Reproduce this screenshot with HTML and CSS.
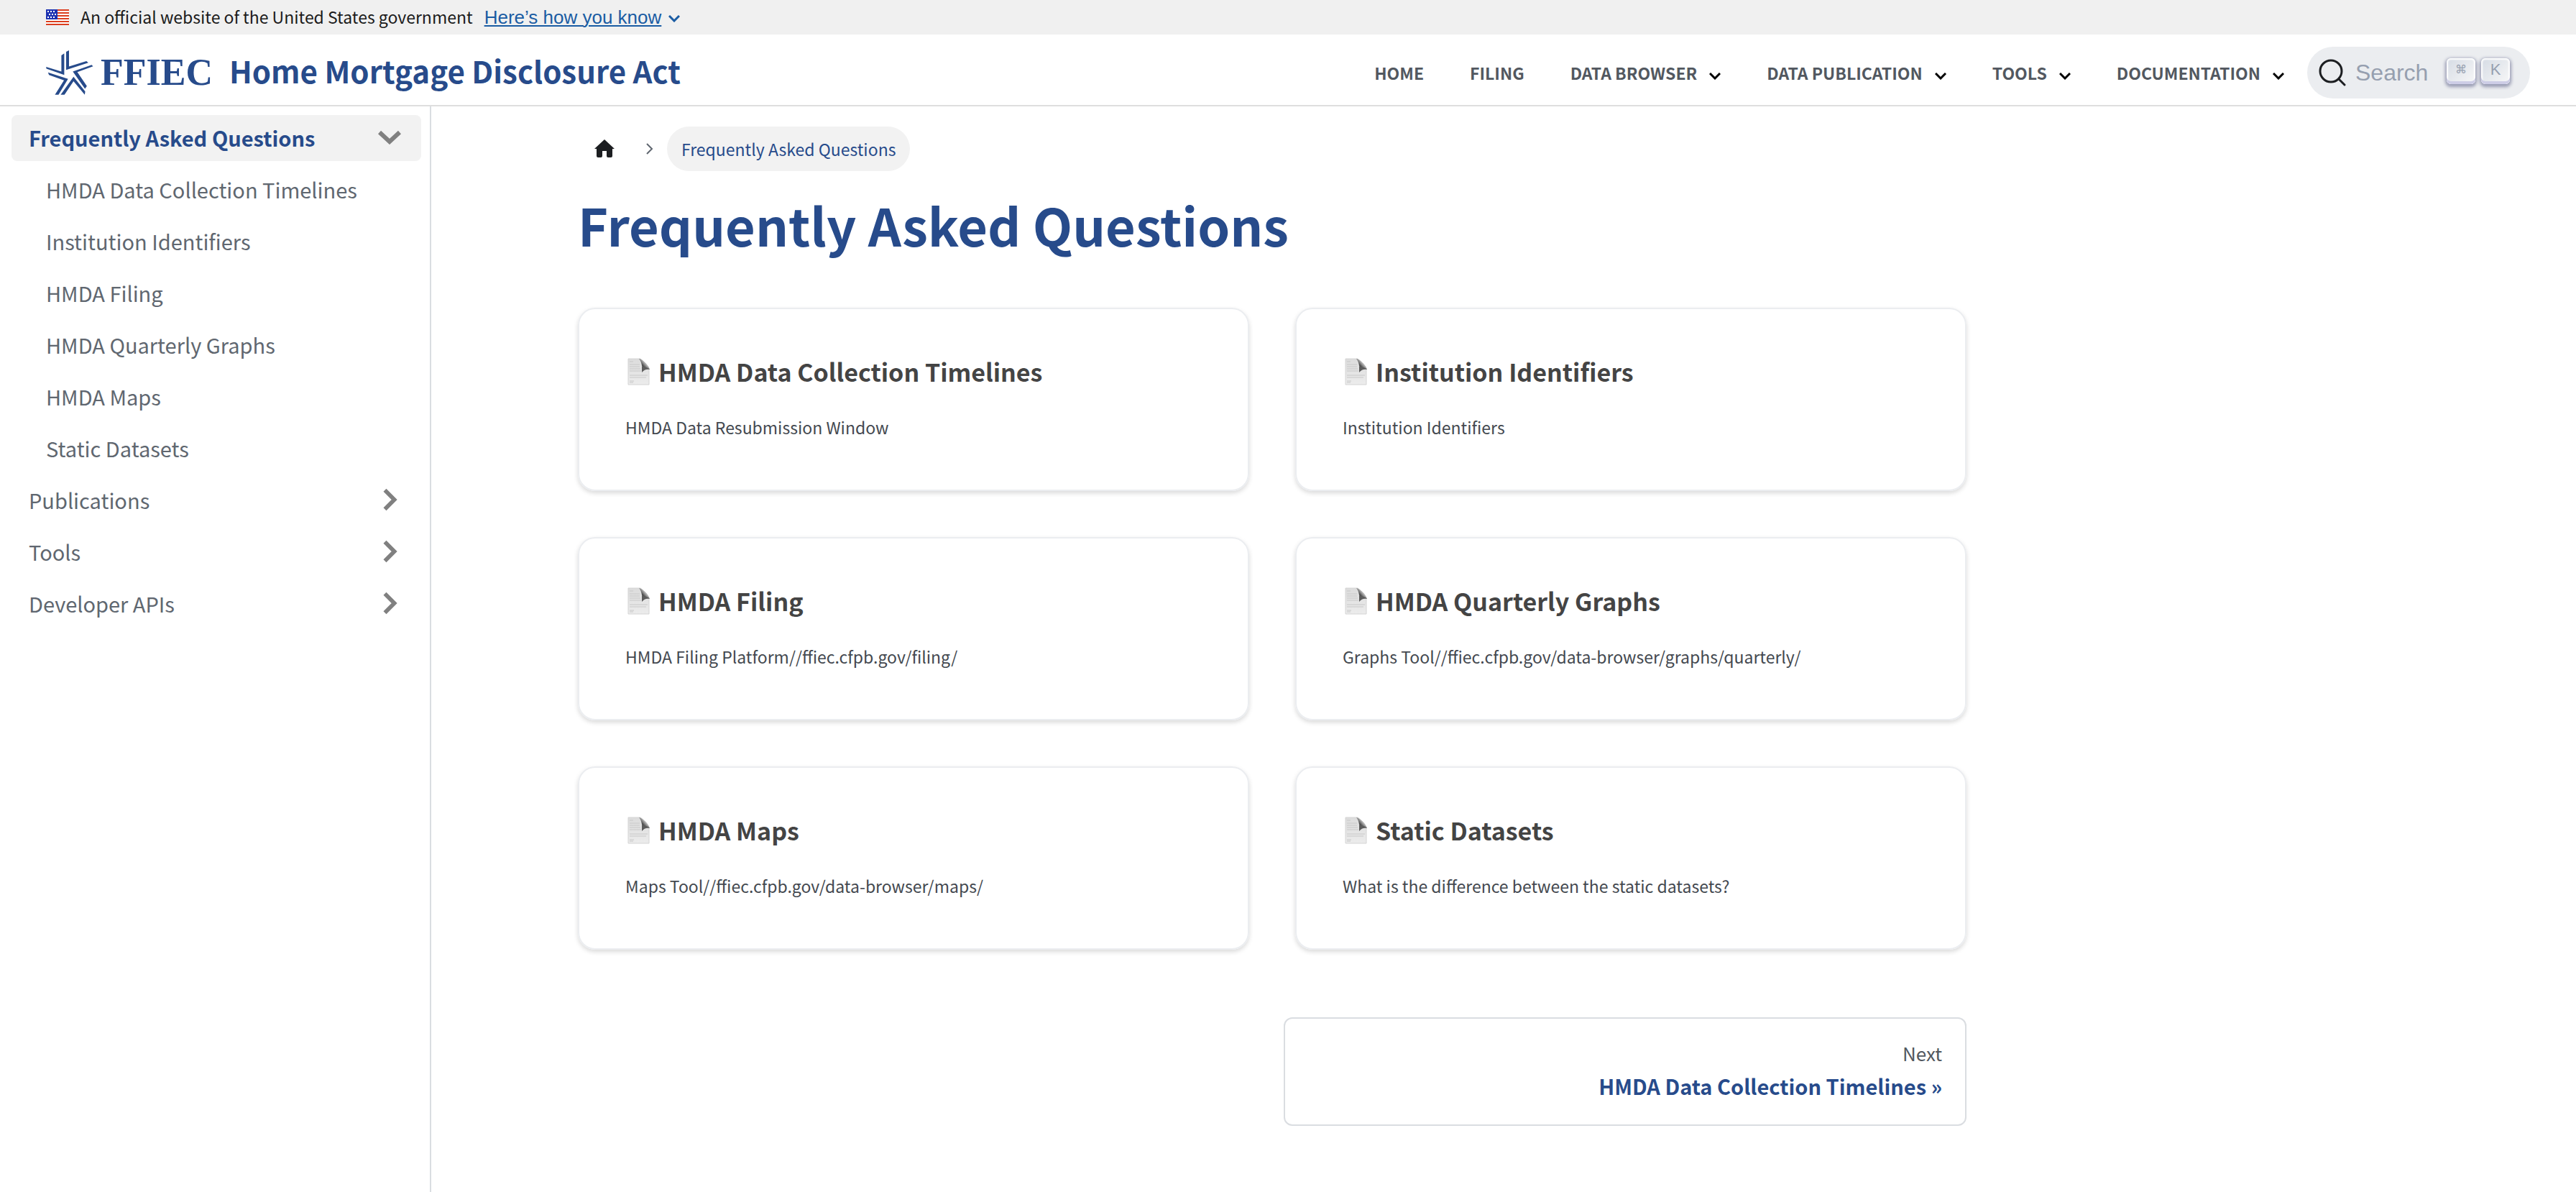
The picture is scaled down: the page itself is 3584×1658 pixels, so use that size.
FILE: index.html
```html
<!DOCTYPE html>
<html lang="en">
<head>
<meta charset="utf-8">
<meta name="viewport" content="width=device-width, initial-scale=1">
<title>Frequently Asked Questions | HMDA Documentation</title>
<link rel="stylesheet" href="styles.css">
</head>
<body>
<svg class="sprite" aria-hidden="true">
  <defs>
    <linearGradient id="page-fill" x1="0" y1="0" x2="0" y2="1">
      <stop offset="0" stop-color="#dcdcdc"/>
      <stop offset="1" stop-color="#ececec"/>
    </linearGradient>
    <linearGradient id="curl-fill" x1="1" y1="0" x2="0" y2="1">
      <stop offset="0" stop-color="#ffffff"/>
      <stop offset="0.4" stop-color="#b4b4b4"/>
      <stop offset="0.6" stop-color="#4c4c4c"/>
      <stop offset="1" stop-color="#d0d0d0"/>
    </linearGradient>
  </defs>
  <symbol id="icon-page" viewBox="0 0 32 38">
    <path d="M1 1h17c3 2 10 9 12 14v22H1z" fill="url(#page-fill)" stroke="#d4d4d4"/>
    <path d="M3 5h5M3 9h14M3 12h14M3 15h15M3 18h16M3 24h25M3 27h23M3 32h6M3 34h5" stroke="#c8c8c8" fill="none"/>
    <path d="M16 1c4 0 14 9 15 15-3-2-8-3-11 2 1-7-1-14-4-17z" fill="url(#curl-fill)"/>
    <path d="M20 12c4 0 9 1 11 4-4-1-8 0-11 4z" fill="#5c5c5c"/>
  </symbol>
  <symbol id="icon-caret" viewBox="0 0 16 10">
    <path d="M1 1l7 7 7-7" fill="none" stroke="currentColor" stroke-width="3"/>
  </symbol>
  <symbol id="icon-right" viewBox="0 0 20 34">
    <path d="M2 3l14 14L2 31" fill="none" stroke="currentColor" stroke-width="6"/>
  </symbol>
  <symbol id="icon-down" viewBox="0 0 32 20">
    <path d="M2 3l14 13L30 3" fill="none" stroke="currentColor" stroke-width="6"/>
  </symbol>
</svg>

<div class="banner">
  <svg class="flag" viewBox="0 0 32 22" aria-hidden="true">
    <path fill="#fff" d="M0 0h32v22H0z"/>
    <path stroke="#db3e1f" stroke-width="2" d="M0 1h32M0 5h32M0 9h32M0 13h32M0 17h32M0 21h32"/>
    <path fill="#1e33b1" d="M0 0h16v14H0z"/>
    <path stroke="#fff" stroke-width="2" stroke-dasharray="2 2" d="M2 3h11M4 7h11M2 11h11"/>
  </svg>
  <span class="banner-text">An official website of the United States government</span>
  <button class="banner-link" type="button"><span>Here’s how you know</span>
    <svg width="16" height="10" aria-hidden="true"><use href="#icon-caret"/></svg></button>
</div>

<header class="navbar">
  <a class="brand" href="#">
    <svg class="star" viewBox="45 57 198 187" aria-hidden="true">
      <path fill="currentColor" d="M109 78l12-8v90l-75-26-1-8 64 20zM129 63l12-6v68l73-23 8 7-93 30zM236 118l6 6-66 24 40 59-8 11-51-72zM122 243h-16l54-75 49 62-2 13-47-56zM53 150l84 27-40 66H82l38-60-63-23z"/>
    </svg>
    <span class="wordmark">FFIEC</span>
    <span class="site-title">Home Mortgage Disclosure Act</span>
  </a>
  <nav class="menu" aria-label="Main">
    <a href="#">HOME</a>
    <a href="#">FILING</a>
    <button type="button">DATA BROWSER<svg width="16" height="10" aria-hidden="true"><use href="#icon-caret"/></svg></button>
    <button type="button">DATA PUBLICATION<svg width="16" height="10" aria-hidden="true"><use href="#icon-caret"/></svg></button>
    <button type="button">TOOLS<svg width="16" height="10" aria-hidden="true"><use href="#icon-caret"/></svg></button>
    <button type="button">DOCUMENTATION<svg width="16" height="10" aria-hidden="true"><use href="#icon-caret"/></svg></button>
  </nav>
  <button class="search" type="button">
    <svg width="38" height="38" viewBox="0 0 38 38" aria-hidden="true"><path d="M28 28l8 8" stroke="currentColor" stroke-width="3" stroke-linecap="round"/><circle cx="17" cy="17" r="15" fill="none" stroke="currentColor" stroke-width="3"/></svg>
    <span class="search-label">Search</span>
    <span class="keys"><kbd class="cmd">⌘</kbd><kbd>K</kbd></span>
  </button>
</header>

<div class="layout">
  <aside class="sidebar">
    <nav aria-label="Docs sidebar">
      <ul>
        <li><a class="active" href="#">Frequently Asked Questions<svg width="32" height="20" aria-hidden="true"><use href="#icon-down"/></svg></a>
          <ul class="sub">
            <li><a href="#">HMDA Data Collection Timelines</a></li>
            <li><a href="#">Institution Identifiers</a></li>
            <li><a href="#">HMDA Filing</a></li>
            <li><a href="#">HMDA Quarterly Graphs</a></li>
            <li><a href="#">HMDA Maps</a></li>
            <li><a href="#">Static Datasets</a></li>
          </ul>
        </li>
        <li><a href="#">Publications<svg class="closed" width="20" height="32" aria-hidden="true"><use href="#icon-right"/></svg></a></li>
        <li><a href="#">Tools<svg class="closed" width="20" height="32" aria-hidden="true"><use href="#icon-right"/></svg></a></li>
        <li><a href="#">Developer APIs<svg class="closed" width="20" height="32" aria-hidden="true"><use href="#icon-right"/></svg></a></li>
      </ul>
    </nav>
  </aside>

  <main class="main">
    <div class="container">
      <article class="doc">
        <nav class="crumbs" aria-label="Breadcrumbs">
          <a class="home" href="#" aria-label="Home"><svg width="28" height="26" viewBox="0 0 28 26"><path fill="currentColor" d="M14 0l14 13h-3v10q0 2-2 2h-4q-2 0-2-2v-7h-6v7q0 2-2 2H5q-2 0-2-2V13H0z"/></svg></a>
          <svg class="sep" width="12" height="16" viewBox="0 0 12 16" aria-hidden="true"><path d="M2 1l7 7-7 7" fill="none" stroke="currentColor" stroke-width="2"/></svg>
          <span class="crumb">Frequently Asked Questions</span>
        </nav>
        <h1>Frequently Asked Questions</h1>
        <section class="cards">
          <a class="card" href="#"><h2><svg width="32" height="38" aria-hidden="true"><use href="#icon-page"/></svg>HMDA Data Collection Timelines</h2><p>HMDA Data Resubmission Window</p></a>
          <a class="card" href="#"><h2><svg width="32" height="38" aria-hidden="true"><use href="#icon-page"/></svg>Institution Identifiers</h2><p>Institution Identifiers</p></a>
          <a class="card" href="#"><h2><svg width="32" height="38" aria-hidden="true"><use href="#icon-page"/></svg>HMDA Filing</h2><p>HMDA Filing Platform//ffiec.cfpb.gov/filing/</p></a>
          <a class="card" href="#"><h2><svg width="32" height="38" aria-hidden="true"><use href="#icon-page"/></svg>HMDA Quarterly Graphs</h2><p>Graphs Tool//ffiec.cfpb.gov/data-browser/graphs/quarterly/</p></a>
          <a class="card" href="#"><h2><svg width="32" height="38" aria-hidden="true"><use href="#icon-page"/></svg>HMDA Maps</h2><p>Maps Tool//ffiec.cfpb.gov/data-browser/maps/</p></a>
          <a class="card" href="#"><h2><svg width="32" height="38" aria-hidden="true"><use href="#icon-page"/></svg>Static Datasets</h2><p>What is the difference between the static datasets?</p></a>
        </section>
        <nav class="pager" aria-label="Docs pages">
          <a class="next" href="#"><span class="next-hint">Next</span><span class="next-label">HMDA Data Collection Timelines »</span></a>
        </nav>
      </article>
    </div>
  </main>
</div>
</body>
</html>
```
FILE: styles.css
```css
:root {
  --blue: #274b8b;
  --nav: #525860;
  --line: #dadde1;
}

* { box-sizing: border-box; }

body {
  margin: 0;
  min-height: 100vh;
  display: flex;
  flex-direction: column;
  background: #fff;
  color: #1c1e21;
  font-family: "Noto Sans CJK SC", "Noto Sans", sans-serif;
  font-size: 23px;
}

a { color: inherit; text-decoration: none; }
ul { list-style: none; margin: 0; padding: 0; }
button { border: 0; background: none; padding: 0; font: inherit; color: inherit; cursor: pointer; }
svg { display: block; flex: none; }
h1, h2, p { margin: 0; }
.sprite { position: absolute; width: 0; height: 0; }

/* Government banner */
.banner {
  display: flex;
  align-items: center;
  height: 48px;
  padding: 0 64px;
  background: #f0f0f0;
  color: #1b1b1b;
}
.flag { width: 32px; height: 22px; }
.banner-text { margin: 0 16px; line-height: 46px; padding-bottom: 2px; }
.banner-link {
  display: flex;
  align-items: center;
  gap: 10px;
  color: #1a5ca3;
  font-family: "Liberation Sans", Arial, sans-serif;
  font-size: 26px;
}
.banner-link span { text-decoration: underline; text-decoration-thickness: 2px; text-underline-offset: 2px; }
.banner-link svg { margin-top: 4px; }

/* Navbar */
.navbar {
  display: flex;
  align-items: center;
  height: 100px;
  padding: 8px 64px 0;
  border-bottom: 2px solid #dedede;
}
.brand { display: flex; align-items: center; color: var(--blue); margin-right: auto; }
.star { width: 66px; height: 62px; }
.wordmark { margin-left: 10px; font: bold 52px/60px "Liberation Serif", "Times New Roman", serif; }
.site-title { margin-left: 23px; padding-bottom: 6px; font-size: 42px; font-weight: 700; line-height: 60px; }
.menu { display: flex; }
.menu a, .menu button {
  display: flex;
  align-items: center;
  gap: 17px;
  padding: 0 32px;
  color: var(--nav);
  font-weight: 700;
  line-height: 36px;
}
.menu svg { margin-top: 10px; color: #000; }
.search {
  display: flex;
  align-items: center;
  width: 310px;
  height: 72px;
  padding: 0 28px 0 16px;
  border-radius: 36px;
  background: #ebedf0;
  color: #1c1e21;
  font-family: "Liberation Sans", Arial, sans-serif;
}
.search-label { margin-left: 13px; color: #969faf; font-size: 32px; }
.keys { display: flex; gap: 8px; margin-left: auto; padding-bottom: 4px; }
kbd {
  width: 40px;
  height: 36px;
  padding-bottom: 4px;
  border-radius: 6px;
  background: linear-gradient(-225deg, #d5dbe4, #f8f8f8);
  box-shadow: inset 0 -4px 0 0 #cdcde6, inset 0 0 2px 2px #fff, 0 2px 4px 2px rgba(30, 35, 90, 0.4);
  color: #969faf;
  font: 22px/32px "Liberation Sans", Arial, sans-serif;
  text-align: center;
}
.cmd { font: 16px/32px "DejaVu Sans", sans-serif; }

/* Sidebar */
.layout { display: flex; flex: 1; }
.sidebar {
  flex: 0 0 600px;
  padding: 12px 12px 0 16px;
  border-right: 2px solid var(--line);
}
.sidebar li + li, .sub { margin-top: 8px; }
.sidebar a {
  display: flex;
  align-items: center;
  justify-content: space-between;
  padding: 0 28px 2px 24px;
  border-radius: 8px;
  color: #606770;
  font-size: 29px;
  line-height: 62px;
}
.sidebar .sub { padding-left: 24px; }
.sidebar .active { background: #f2f2f2; color: var(--blue); font-weight: 700; }
.sidebar svg { color: #808080; }
.sidebar .closed { margin-right: 5px; }

/* Content */
.main { flex: 1; min-width: 0; padding-top: 28px; }
.container { max-width: 2640px; margin: 0 auto; padding: 0 32px; }
.doc { width: 75%; }
.crumbs { display: flex; align-items: center; }
.home { margin-left: 23px; }
.sep { margin: 0 18px 0 43px; color: #606770; }
.crumb { padding: 0 20px; border-radius: 31px; background: #f2f2f2; color: var(--blue); line-height: 62px; }
h1 { margin: 29px 0 71px; color: var(--blue); font-size: 72px; line-height: 90px; }
.cards { display: grid; grid-template-columns: 1fr 1fr; gap: 64px; }
.card {
  padding: 64px;
  border: 2px solid #ebedf0;
  border-radius: 24px;
  box-shadow: 0 3px 6px rgba(0, 0, 0, 0.15);
}
.card h2 {
  display: flex;
  align-items: center;
  gap: 11px;
  padding-left: 3px;
  color: #444;
  font-size: 34px;
  line-height: 46px;
}
.card p { margin-top: 31px; color: #444950; line-height: 46px; }
.pager { display: grid; grid-template-columns: 1fr 1fr; gap: 32px; margin-top: 94px; }
.next {
  grid-column: 2;
  display: flex;
  flex-direction: column;
  padding: 27px 32px 30px;
  border: 2px solid var(--line);
  border-radius: 12px;
  text-align: right;
}
.next-hint { color: var(--nav); font-size: 26px; line-height: 42px; }
.next-label { color: var(--blue); font-size: 29px; font-weight: 700; line-height: 48px; }
```
